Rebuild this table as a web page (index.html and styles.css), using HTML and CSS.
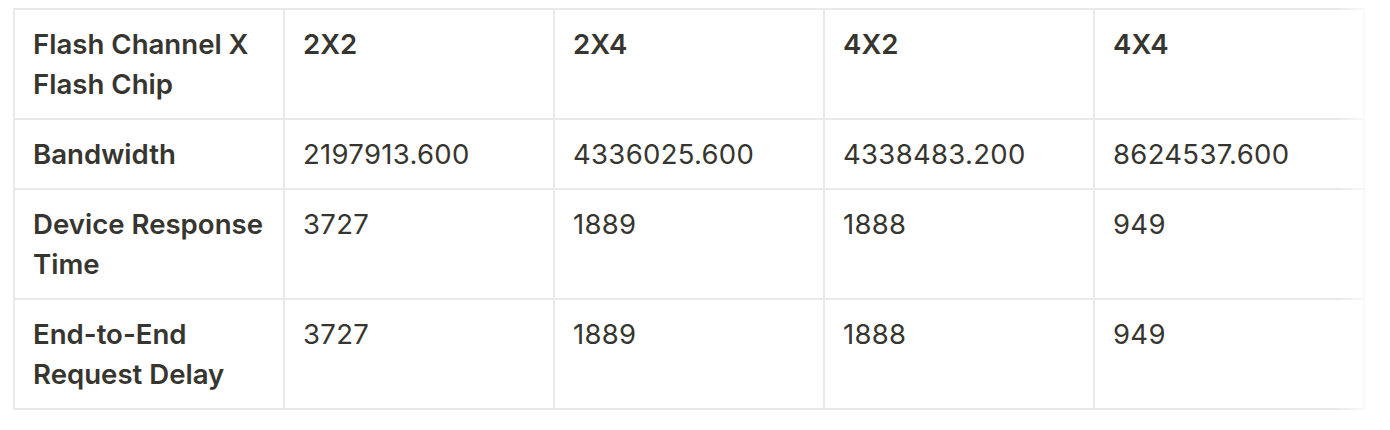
FILE: index.html
```html
<!DOCTYPE html>
<html lang="en">
<head>
<meta charset="utf-8">
<title>Flash table</title>
<link rel="stylesheet" href="styles.css">
</head>
<body>
<div class="wrap">
  <table class="grid">
    <tr class="head">
      <th>Flash Channel X Flash Chip</th>
      <th>2X2</th>
      <th>2X4</th>
      <th>4X2</th>
      <th>4X4</th>
    </tr>
    <tr>
      <th>Bandwidth</th>
      <td>2197913.600</td>
      <td>4336025.600</td>
      <td>4338483.200</td>
      <td>8624537.600</td>
    </tr>
    <tr>
      <th>Device Response Time</th>
      <td>3727</td>
      <td>1889</td>
      <td>1888</td>
      <td>949</td>
    </tr>
    <tr>
      <th>End-to-End Request Delay</th>
      <td>3727</td>
      <td>1889</td>
      <td>1888</td>
      <td>949</td>
    </tr>
  </table>
  <div class="fade"></div>
</div>
</body>
</html>
```
FILE: styles.css
```css
html, body {
  margin: 0;
  background: #ffffff;
}
body {
  padding: 8px 0 0 13px;
  font-family: Inter, "Noto Sans", "Liberation Sans", sans-serif;
  color: #37352f;
}
.wrap {
  position: relative;
  display: inline-block;
}
.grid {
  border-collapse: collapse;
  table-layout: fixed;
}
.grid th,
.grid td {
  width: 270px;
  box-sizing: border-box;
  border: 2px solid #e9e9e7;
  padding: 14px 18px;
  font-size: 27.5px;
  line-height: 40px;
  text-align: left;
  vertical-align: top;
  font-weight: 400;
}
.grid td {
  letter-spacing: 0.3px;
}
.grid th {
  font-weight: 600;
  font-size: 27.6px;
}
.grid th:first-child {
  padding-right: 8px;
}
.fade {
  position: absolute;
  top: 0;
  right: 0;
  bottom: 0;
  width: 28px;
  background: linear-gradient(to right, rgba(255,255,255,0), rgba(255,255,255,0.75));
  pointer-events: none;
}
```
